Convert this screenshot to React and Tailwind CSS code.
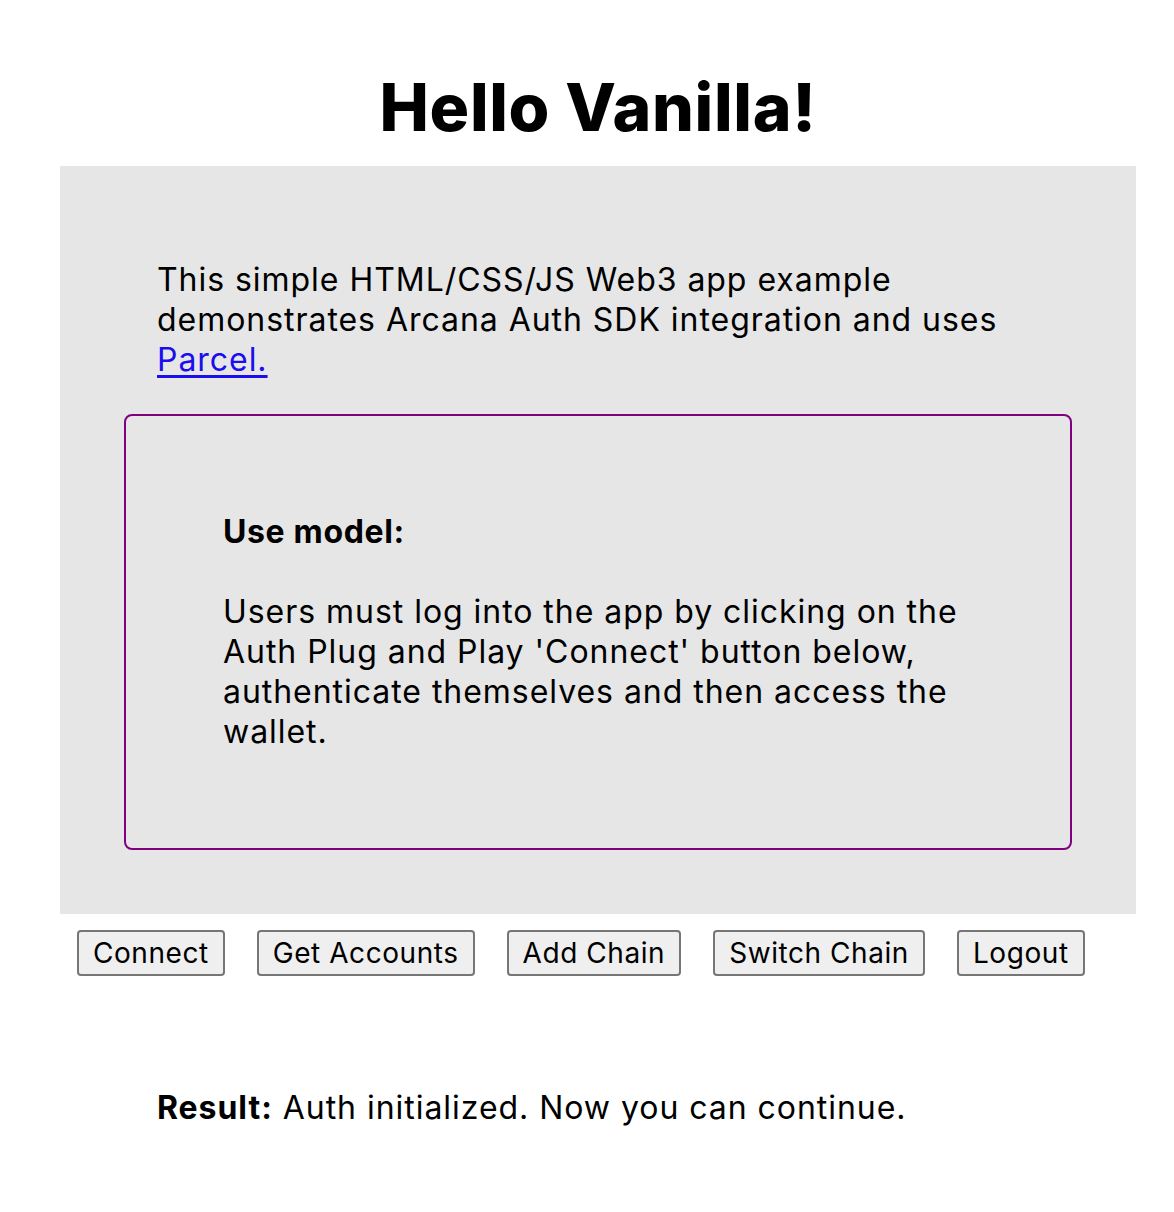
import React from 'react';

const buttons = ['Connect', 'Get Accounts', 'Add Chain', 'Switch Chain', 'Logout'];

const App = () => {
  return (
    <div className="min-h-[1212px] bg-white text-black">
      <div className="ml-[60px] w-[1076px] font-['Inter','Noto_Sans',sans-serif]">
        {/* Title */}
        <h1 className="pt-[66px] pb-[18px] text-center text-[66px] leading-[82px] font-extrabold tracking-[0.01em]">
          Hello Vanilla!
        </h1>

        {/* Grey panel */}
        <div className="bg-[#e6e6e6] px-[64px] pt-[94px] pb-[64px]">
          <p className="px-[33px] text-[32px] leading-[40px] tracking-[0.03em]">
            This simple HTML/CSS/JS Web3 app example demonstrates Arcana Auth SDK integration and uses{' '}
            <a href="#" className="text-[#1a0dee] underline underline-offset-[4px]">Parcel.</a>
          </p>

          <div className="mt-[34px] h-[436px] rounded-[8px] border-2 border-[#800080] px-[97px] pt-[96px]">
            <p className="text-[32px] leading-[40px] tracking-[0.02em] font-bold">Use model:</p>
            <p className="mt-[40px] text-[32px] leading-[40px] tracking-[0.03em]">
              Users must log into the app by clicking on the Auth Plug and Play 'Connect' button below,
              authenticate themselves and then access the wallet.
            </p>
          </div>
        </div>

        {/* Buttons */}
        <div className="mt-[16px] flex gap-[32px] pl-[17px]">
          {buttons.map((b) => (
            <button
              key={b}
              className="h-[46px] rounded-[4px] border-2 border-[#767676] bg-[#efefef] px-[14px] text-[28px] leading-none tracking-[0.02em]"
            >
              {b}
            </button>
          ))}
        </div>

        {/* Result */}
        <p className="mt-[112px] pl-[97px] text-[32px] leading-[40px] tracking-[0.03em]">
          <span className="font-bold">Result:</span> Auth initialized. Now you can continue.
        </p>
      </div>
    </div>
  );
};

export default App;
